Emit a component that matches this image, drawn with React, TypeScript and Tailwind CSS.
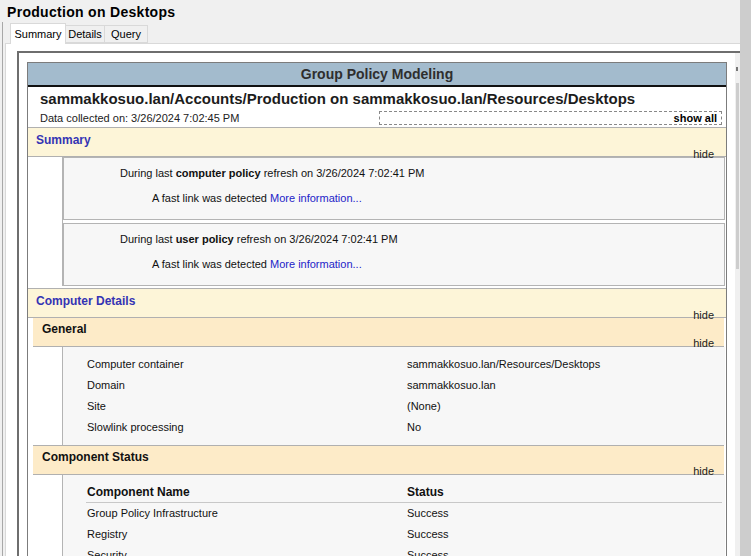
import React from 'react';

const SectionHeader: React.FC<{ title: string; blue?: boolean; inset?: boolean }> = ({ title, blue, inset }) => (
  <div
    className={
      inset
        ? 'ml-[5px] mr-[2px] h-[29px] bg-[#fdebc8] border-b border-[#b0b0b0] flex flex-col pl-[9px] pr-[10px]'
        : 'h-[30px] bg-[#fdf5d8] border-t border-b border-[#b0b0b0] flex flex-col pl-[8px] pr-[12px]'
    }
  >
    <div className={blue ? 'pt-[4px] text-[12px] font-bold text-[#3434b4] leading-[16px]' : 'pt-[3px] text-[12px] font-bold text-[#111] leading-[16px]'}>
      {title}
    </div>
    <div className="mt-auto self-end text-[11px] leading-[12px] pb-[3px] text-[#222]">hide</div>
  </div>
);

const Refresh: React.FC<{ kind: string }> = ({ kind }) => (
  <div className="h-[63px] bg-[#f7f7f7] border border-[#b4b4b4] flex flex-col text-[11px] text-[#111]">
    <div className="pl-[56px] pt-[7px] leading-[16px]">
      During last <b>{kind}</b> refresh on 3/26/2024 7:02:41 PM
    </div>
    <div className="pl-[88px] pt-[9px] leading-[16px]">
      A fast link was detected <span className="text-[#2323c8]">More information...</span>
    </div>
  </div>
);

const Row: React.FC<{ a: string; b: string; bold?: boolean }> = ({ a, b, bold }) => (
  <div className={'flex h-[21px] items-center text-[#111] ' + (bold ? 'font-bold text-[12px]' : 'text-[11px]')}>
    <div className="w-[344px] pl-[24px] shrink-0">{a}</div>
    <div>{b}</div>
  </div>
);

const App: React.FC = () => {
  return (
    <div className="w-[751px] h-[556px] overflow-hidden bg-[#cdcdcd] flex font-['Liberation_Sans',Arial,sans-serif]">
      <div className="w-[740px] h-full bg-[#f0f0f0] flex flex-col">
        {/* Title */}
        <div className="h-[22px] pl-[7px] pt-[4px] text-[14px] font-bold text-black leading-[17px] tracking-[0.3px]">
          Production on Desktops
        </div>

        <div className="flex-1 ml-[2px] border-l border-[#a8a8a8] flex flex-col min-h-0">
          {/* Tabs */}
          <div className="h-[21px] flex items-end pl-[7px] text-[11px] text-black relative z-10">
            <div className="w-[56px] h-[21px] bg-white border border-b-0 border-[#d9d9d9] flex items-center justify-center -mb-px">Summary</div>
            <div className="w-[39px] h-[18px] bg-[#f0f0f0] border border-l-0 border-[#d9d9d9] flex items-center justify-center">Details</div>
            <div className="w-[43px] h-[18px] bg-[#f0f0f0] border border-l-0 border-[#d9d9d9] flex items-center justify-center">Query</div>
          </div>

          {/* Tab panel */}
          <div className="flex-1 ml-[2px] bg-white border-t border-l border-[#d9d9d9] pt-[7px] pl-[11px] flex min-h-0">
            <div className="flex-1 border-t-2 border-l-2 border-[#6e6e6e] flex min-h-0">
              {/* page */}
              <div className="flex-1 bg-white pt-[9px] pl-[8px] pr-[8px] min-w-0">
                <div className="border border-[#7c7c7c] border-b-0 bg-white">
                  {/* Blue header */}
                  <div className="h-[24px] bg-[#a3bbcd] border-b-2 border-[#111] flex items-center justify-center text-[14px] font-bold text-[#2e2e2e]">
                    Group Policy Modeling
                  </div>
                  {/* Title block */}
                  <div className="h-[40px] pl-[12px] pr-[4px] flex flex-col">
                    <div className="pt-[2px] text-[15px] font-bold text-[#1c1c1c] leading-[19px]">
                      sammakkosuo.lan/Accounts/Production on sammakkosuo.lan/Resources/Desktops
                    </div>
                    <div className="flex items-end mt-[3px]">
                      <div className="text-[11px] text-[#222] leading-[14px] w-[339px] shrink-0">Data collected on: 3/26/2024 7:02:45 PM</div>
                      <div className="flex-1 h-[14px] border border-dashed border-[#888] text-right text-[11px] font-bold leading-[12px] pr-[4px] text-black">
                        show all
                      </div>
                    </div>
                  </div>

                  <SectionHeader title="Summary" blue />
                  <div className="pl-[34px] pr-[1px]">
                    <div className="border-l border-[#b4b4b4]">
                      <Refresh kind="computer policy" />
                      <div className="h-[3px] bg-white" />
                      <Refresh kind="user policy" />
                    </div>
                  </div>
                  <div className="h-[2px]" />

                  <SectionHeader title="Computer Details" blue />
                  <SectionHeader title="General" inset />
                  <div className="pl-[34px] pr-[1px]">
                    <div className="bg-[#f7f7f7] border-l border-[#b4b4b4] pt-[7px] pb-[7px] flex flex-col">
                      <Row a="Computer container" b="sammakkosuo.lan/Resources/Desktops" />
                      <Row a="Domain" b="sammakkosuo.lan" />
                      <Row a="Site" b="(None)" />
                      <Row a="Slowlink processing" b="No" />
                    </div>
                  </div>
                  <div className="ml-[5px] mr-[2px] border-t border-[#b0b0b0]" />
                  <SectionHeader title="Component Status" inset />
                  <div className="pl-[34px] pr-[1px]">
                    <div className="bg-[#f7f7f7] border-l border-[#b4b4b4] pt-[6px] pb-[20px] flex flex-col">
                      <div className="mr-[3px]">
                        <Row a="Component Name" b="Status" bold />
                        <div className="ml-[23px] border-t border-[#c8c8c8]" />
                      </div>
                      <Row a="Group Policy Infrastructure" b="Success" />
                      <Row a="Registry" b="Success" />
                      <Row a="Security" b="Success" />
                    </div>
                  </div>
                </div>
              </div>
              {/* scrollbar */}
              <div className="w-[5px] bg-[#f0f0f0] flex flex-col pt-[14px]">
                <div className="h-[4px] w-[2px] bg-[#777] ml-[1px]" />
                <div className="mt-[12px] h-[186px] w-[3px] bg-[#cdcdcd] ml-[1px]" />
              </div>
            </div>
          </div>
        </div>
      </div>
    </div>
  );
};

export default App;
